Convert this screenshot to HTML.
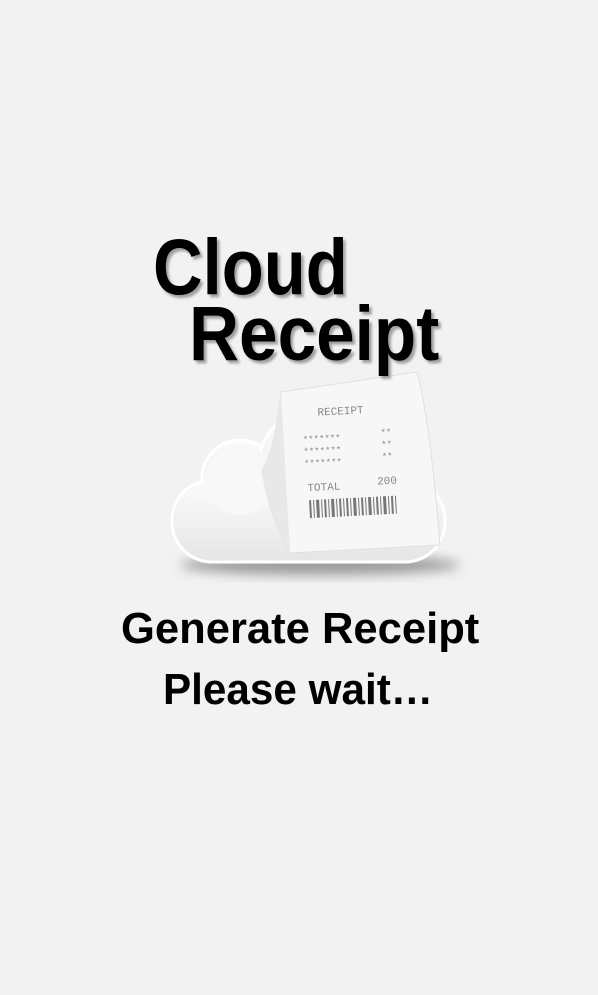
<!DOCTYPE html>
<html><head><meta charset="utf-8"><style>
html,body{margin:0;padding:0;background:#f2f2f2;width:598px;height:995px;overflow:hidden;font-family:"Liberation Sans",sans-serif;}
.t{position:absolute;font-weight:bold;color:#000;white-space:nowrap;transform-origin:0 0;}
</style></head><body>
<svg width="598" height="995" style="position:absolute;left:0;top:0">
<defs>
<linearGradient id="cg" x1="0" y1="0" x2="0" y2="1"><stop offset="0" stop-color="#fbfbfb"/><stop offset="1" stop-color="#e6e6e6"/></linearGradient>
<filter id="sh" x="-20%" y="-20%" width="140%" height="160%"><feGaussianBlur stdDeviation="6"/></filter>
</defs>
<ellipse cx="320" cy="565" rx="140" ry="10" fill="#999" filter="url(#sh)"/>
<g fill="url(#cg)" stroke="#fff" stroke-width="3">
<circle cx="240" cy="478" r="38"/>
<circle cx="305" cy="460" r="45"/>
<rect x="172" y="480" width="273" height="82" rx="40"/>
</g>
<rect x="178" y="486" width="261" height="72" rx="36" fill="url(#cg)"/>
<circle cx="240" cy="480" r="35" fill="#f8f8f8"/>
<circle cx="305" cy="462" r="42" fill="#f6f6f6"/>
<path d="M281 392 L417 372 Q430 420 440 545 L290 553 Q270 520 262 470 Q275 450 281 392 Z" fill="#f7f7f7" stroke="#e0e0e0" stroke-width="1"/>
<path d="M262 470 Q275 450 281 392 L290 553 Q270 520 262 470Z" fill="#e8e8e8"/>
<g transform="rotate(-3 350 460)" font-family="Liberation Mono,monospace" fill="#888">
<text x="320" y="414" font-size="11">RECEIPT</text>
<text x="304" y="440" font-size="9">*******</text><text x="382" y="437" font-size="9">**</text>
<text x="304" y="452" font-size="9">*******</text><text x="382" y="449" font-size="9">**</text>
<text x="304" y="464" font-size="9">*******</text><text x="382" y="461" font-size="9">**</text>
<text x="306" y="489" font-size="11">TOTAL</text><text x="376" y="486" font-size="11">200</text>
<g fill="#777">
<rect x="307" y="498" width="2" height="18"/><rect x="311" y="498" width="1" height="18"/><rect x="314" y="498" width="3" height="18"/><rect x="319" y="498" width="1" height="18"/><rect x="322" y="498" width="2" height="18"/><rect x="326" y="498" width="1" height="18"/><rect x="329" y="498" width="3" height="18"/><rect x="334" y="498" width="1" height="18"/><rect x="337" y="498" width="2" height="18"/><rect x="341" y="498" width="1" height="18"/><rect x="344" y="498" width="2" height="18"/><rect x="348" y="498" width="1" height="18"/><rect x="351" y="498" width="3" height="18"/><rect x="356" y="498" width="1" height="18"/><rect x="359" y="498" width="2" height="18"/><rect x="363" y="498" width="1" height="18"/><rect x="366" y="498" width="3" height="18"/><rect x="371" y="498" width="1" height="18"/><rect x="374" y="498" width="2" height="18"/><rect x="378" y="498" width="1" height="18"/><rect x="381" y="498" width="3" height="18"/><rect x="386" y="498" width="1" height="18"/><rect x="389" y="498" width="2" height="18"/><rect x="393" y="498" width="1" height="18"/>
</g></g>
</svg>
<div class="t" style="left:153px;top:221px;font-size:79px;transform:scaleX(0.87);text-shadow:3px 3px 3px rgba(0,0,0,.35)">Cloud</div>
<div class="t" style="left:189px;top:290px;font-size:77px;transform:scaleX(0.9);text-shadow:3px 3px 3px rgba(0,0,0,.35)">Receipt</div>
<div class="t" style="left:121px;top:604px;font-size:44px;transform:scaleX(0.99)">Generate Receipt</div>
<div class="t" style="left:163px;top:665px;font-size:44px;transform:scaleX(0.96)">Please wait…</div>
</body></html>
